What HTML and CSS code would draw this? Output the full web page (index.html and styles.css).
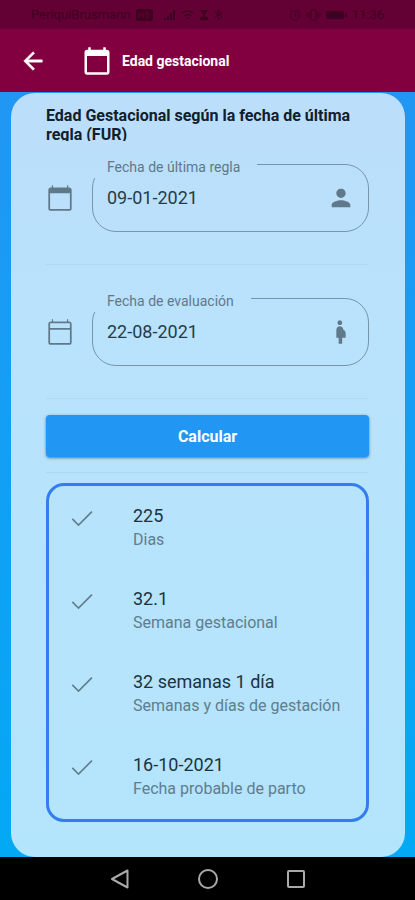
FILE: index.html
```html
<!DOCTYPE html>
<html lang="es">
<head>
<meta charset="utf-8">
<meta name="viewport" content="width=device-width, initial-scale=1">
<title>Edad gestacional</title>
<link rel="stylesheet" href="styles.css">
</head>
<body>
<div class="status">
  <span class="carrier">PeriquiBrusmann</span>
  <svg class="hd" width="17" height="12" viewBox="0 0 17 12"><rect width="17" height="12" rx="2" fill="currentColor"/><path d="M3 3v6M3 6h4M7 3v6M10 3v6h2q2-3 0-6z" fill="none" stroke="#630034"/></svg>
  <svg class="signal" width="12" height="12" viewBox="0 0 12 12"><path d="M1 11V9M4 11V7M7 11V4M10 11V1" fill="none" stroke="currentColor" stroke-width="2"/></svg>
  <svg width="13" height="12" viewBox="0 0 13 12"><path d="M1 4q5.500-4 11 0M3 7q3.500-3 7 0M5 9.500q1.500-1.500 3 0" fill="none" stroke="currentColor" stroke-width="1.500"/></svg>
  <svg width="10" height="12" viewBox="0 0 10 12"><path d="M1 1h8L6 5v3h3v3H1V8h3V5z" fill="currentColor"/></svg>
  <svg width="9" height="12" viewBox="0 0 9 12"><path d="M4 1v10l4-3-7-5M1 8l7-4-4-3" fill="none" stroke="currentColor"/></svg>
  <svg class="alarm" width="12" height="12" viewBox="0 0 12 12"><circle cx="6" cy="6.500" r="4.500" fill="none" stroke="currentColor"/><path d="M6 4v3h2M1 2l2-1M11 2L9 1" fill="none" stroke="currentColor"/></svg>
  <svg width="15" height="12" viewBox="0 0 15 12"><path d="M5 1h5v10H5zM3 3v6M12 3v6M1 4v4M14 4v4" fill="none" stroke="currentColor"/></svg>
  <svg width="21" height="8" viewBox="0 0 21 8"><rect width="18" height="8" rx="1" fill="currentColor"/><path d="M19 2h2v4h-2z" fill="currentColor"/></svg>
  <span class="clock">11:36</span>
</div>
<header class="appbar">
  <button class="back" type="button" aria-label="Volver"><svg width="28" height="28" viewBox="0 0 24 24"><path d="M20 11H7.830l5.590-5.590L12 4l-8 8 8 8 1.410-1.410L7.830 13H20z" fill="currentColor" stroke="currentColor" stroke-width=".4"/></svg></button>
  <svg class="event" width="30" height="30" viewBox="0 0 24 24"><path d="M20 3h-1V1h-2v2H7V1H5v2H4c-1.100 0-2 .9-2 2v16c0 1.100.9 2 2 2h16c1.100 0 2-.9 2-2V5c0-1.100-.9-2-2-2zm0 18H4V8h16z" fill="currentColor"/></svg>
  <h1>Edad gestacional</h1>
</header>
<main>
  <div class="card">
    <h2>Edad Gestacional según la fecha de última regla (FUR)</h2>
    <div class="row">
      <svg class="cal" width="28" height="28" viewBox="0 0 24 24"><path d="M20 3h-1V1h-1v2H6V1H5v2H4c-1.100 0-2 .9-2 2v16c0 1.100.9 2 2 2h16c1.100 0 2-.9 2-2V5c0-1.100-.9-2-2-2zm.500 18.500h-17V8h17z" fill="currentColor"/></svg>
      <fieldset>
        <legend><label for="fur">Fecha de última regla</label></legend>
        <div class="inner">
          <input id="fur" type="text" value="09-01-2021">
          <svg width="28" height="28" viewBox="0 0 24 24"><path d="M12 12c2.210 0 4-1.790 4-4s-1.790-4-4-4-4 1.790-4 4 1.790 4 4 4zm0 2c-2.670 0-8 1.340-8 4v2h16v-2c0-2.660-5.330-4-8-4z" fill="currentColor"/></svg>
        </div>
      </fieldset>
    </div>
    <hr>
    <div class="row">
      <svg class="cal" width="28" height="28" viewBox="0 0 24 24"><path d="M20 3h-1V1h-1v2H6V1H5v2H4c-1.100 0-2 .9-2 2v16c0 1.100.9 2 2 2h16c1.100 0 2-.9 2-2V5c0-1.100-.9-2-2-2zm.500 18.500h-17V10h17zM20.500 8.500h-17v-4h17z" fill="currentColor"/></svg>
      <fieldset>
        <legend><label for="eval">Fecha de evaluación</label></legend>
        <div class="inner">
          <input id="eval" type="text" value="22-08-2021">
          <svg width="28" height="28" viewBox="0 0 24 24"><path d="M9 4c0-1.110.89-2 2-2s2 .89 2 2-.89 2-2 2-2-.89-2-2zm7 9c-.010-1.340-.83-2.510-2-3 0-1.660-1.340-3-3-3s-3 1.340-3 3v7h2v5h3v-5h3z" fill="currentColor"/></svg>
        </div>
      </fieldset>
    </div>
    <hr>
    <button class="calc" type="button">Calcular</button>
    <hr class="tight">
    <ul class="results">
      <li><svg width="28" height="28" viewBox="0 0 24 24"><path d="M9 17.100L4.200 12.300l-1 1L9 19 21 7l-1-1z" fill="currentColor"/></svg><div><strong>225</strong><span>Dias</span></div></li>
      <li><svg width="28" height="28" viewBox="0 0 24 24"><path d="M9 17.100L4.200 12.300l-1 1L9 19 21 7l-1-1z" fill="currentColor"/></svg><div><strong>32.1</strong><span>Semana gestacional</span></div></li>
      <li><svg width="28" height="28" viewBox="0 0 24 24"><path d="M9 17.100L4.200 12.300l-1 1L9 19 21 7l-1-1z" fill="currentColor"/></svg><div><strong>32 semanas 1 día</strong><span>Semanas y días de gestación</span></div></li>
      <li><svg width="28" height="28" viewBox="0 0 24 24"><path d="M9 17.100L4.200 12.300l-1 1L9 19 21 7l-1-1z" fill="currentColor"/></svg><div><strong>16-10-2021</strong><span>Fecha probable de parto</span></div></li>
    </ul>
  </div>
</main>
<nav>
  <button type="button" aria-label="Atrás"><svg width="24" height="24" viewBox="0 0 24 24"><path d="M19.500 3.500v17L4 12z" fill="none" stroke="currentColor" stroke-width="2" stroke-linejoin="round"/></svg></button>
  <button type="button" aria-label="Inicio"><svg width="24" height="24" viewBox="0 0 24 24"><circle cx="12" cy="12" r="9" fill="none" stroke="currentColor" stroke-width="2"/></svg></button>
  <button type="button" aria-label="Recientes"><svg width="24" height="24" viewBox="0 0 24 24"><rect x="4" y="4" width="16" height="16" rx="1" fill="none" stroke="currentColor" stroke-width="2"/></svg></button>
</nav>
</body>
</html>
```
FILE: styles.css
```css
* { box-sizing: border-box; }
body {
  margin: 0;
  min-height: 100vh;
  display: flex;
  flex-direction: column;
  font-family: Roboto, "Liberation Sans", sans-serif;
  color: #20323e;
  background: #000;
}
svg { display: block; flex: none; }
button { border: 0; padding: 0; background: none; color: inherit; font-family: inherit; }
.status {
  display: flex;
  flex: none;
  align-items: center;
  gap: 5px;
  height: 29px;
  padding: 0 31px;
  background: #630034;
  color: #3f0022;
  font-size: 13px;
}
.signal { margin-left: 6px; }
.alarm { margin-left: auto; }
.appbar {
  display: flex;
  flex: none;
  align-items: center;
  height: 63px;
  padding: 0 19px;
  background: #82003f;
  color: #fff;
}
.event { margin: 0 10px 0 35px; }
h1 { margin: 0; font-size: 14px; line-height: 20px; font-weight: 700; }
main {
  flex: 1;
  padding: 1px 10px 0 11px;
  background: linear-gradient(#2196f3, #03a9f4);
}
.card {
  height: 100%;
  padding: 13px 36px 35px 35px;
  border-radius: 24px;
  background: linear-gradient(#bbdefb, #b9e2fc 30%, #b3e5fc);
}
h2 {
  margin: 0 0 9px;
  height: 35px;
  overflow: hidden;
  color: #10202c;
  font-size: 16px;
  line-height: 19px;
  font-weight: 700;
}
.row { display: flex; align-items: center; color: #60798a; }
.cal { margin-top: 14px; }
fieldset {
  flex: 1;
  min-width: 0;
  height: 82px;
  margin: 0 0 0 18px;
  padding: 0;
  border: 1px solid #7896aa;
  border-radius: 24px;
}
legend {
  height: 28px;
  margin-left: 1px;
  padding: 4px 17px 0 13px;
  font-size: 14px;
  line-height: 26px;
}
.inner { display: flex; align-items: center; padding: 6px 13px 0 14px; }
input {
  flex: 1;
  min-width: 0;
  padding: 0;
  border: 0;
  background: none;
  color: #263c49;
  font-family: inherit;
  font-size: 18px;
  line-height: 24px;
  outline: 0;
}
hr { margin: 32px 0 19px; border: 0; border-top: 1px solid #b0d8f0; }
.calc {
  display: block;
  width: 100%;
  height: 42px;
  margin-top: -3px;
  border-radius: 4px;
  background: #2196f3;
  color: #fff;
  font-size: 16px;
  font-weight: 700;
  box-shadow: 0 1px 3px #47789a;
}
hr.tight { margin: 15px 0 10px; }
.results {
  display: flex;
  flex-direction: column;
  gap: 35px;
  margin: 0;
  padding: 18px 19px;
  list-style: none;
  border: 3px solid #327eed;
  border-radius: 18px;
}
li { display: flex; gap: 37px; color: #607d8d; }
strong, span { display: block; }
strong { color: #20323e; font-size: 18px; line-height: 24px; font-weight: 400; }
li span { font-size: 16px; line-height: 24px; }
nav {
  display: flex;
  flex: none;
  justify-content: center;
  align-items: center;
  gap: 64px;
  height: 44px;
  background: #000;
  color: #aaa;
}
```
